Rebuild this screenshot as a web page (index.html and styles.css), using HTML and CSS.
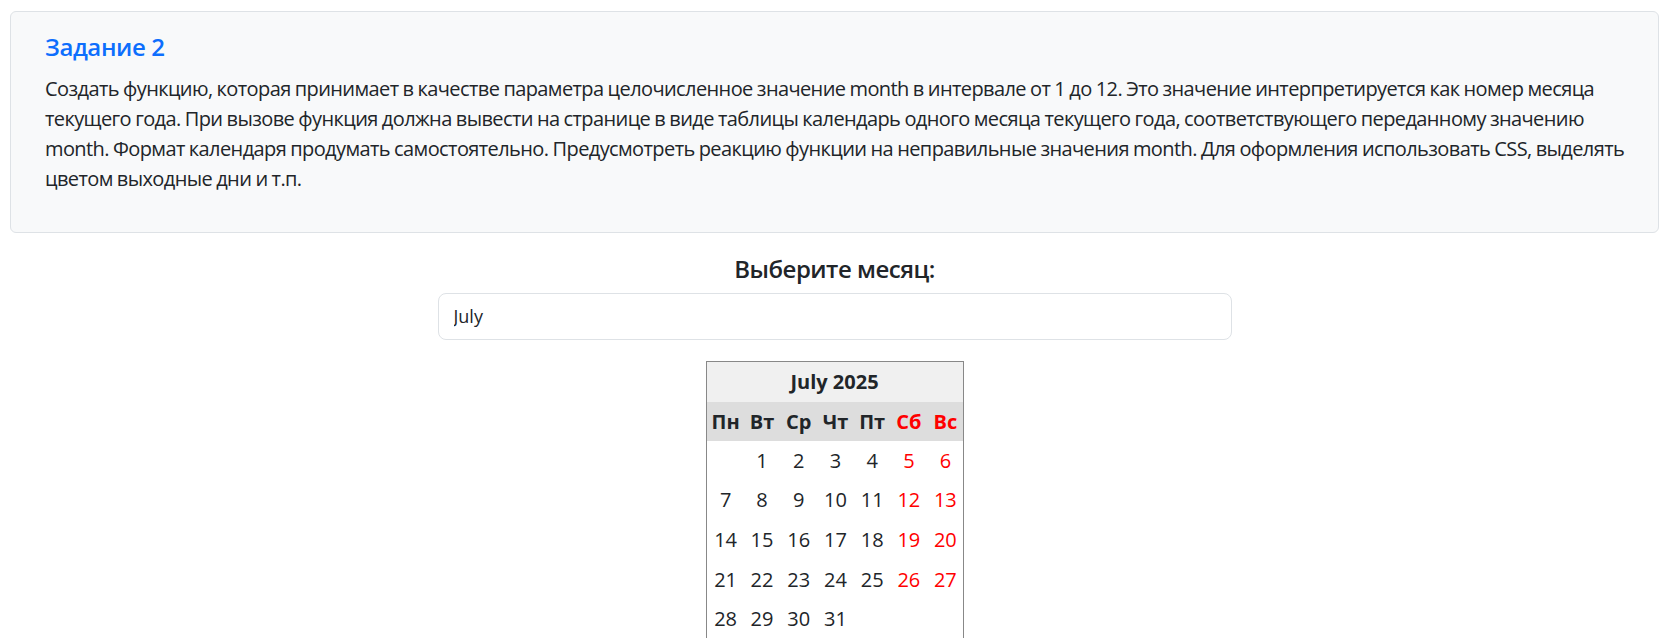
FILE: index.html
```html
<!DOCTYPE html>
<html lang="ru">
<head>
<meta charset="utf-8">
<title>Задание 2</title>
<link rel="stylesheet" href="styles.css">
</head>
<body>
<div class="page">
  <section class="task-card">
    <h2 class="task-title">Задание 2</h2>
    <p class="task-text">Создать функцию, которая принимает в качестве параметра целочисленное значение month в интервале от 1 до 12. Это значение интерпретируется как номер месяца текущего года. При вызове функция должна вывести на странице в виде таблицы календарь одного месяца текущего года, соответствующего переданному значению month. Формат календаря продумать самостоятельно. Предусмотреть реакцию функции на неправильные значения month. Для оформления использовать CSS, выделять цветом выходные дни и т.п.</p>
  </section>

  <div class="picker">
    <h3 class="picker-title">Выберите месяц:</h3>
    <input class="month-input" type="text" value="July" readonly>
  </div>

  <div class="calendar-wrap">
    <table class="calendar">
      <thead>
        <tr><th class="cal-caption" colspan="7">July 2025</th></tr>
        <tr class="cal-days">
          <th>Пн</th><th>Вт</th><th>Ср</th><th>Чт</th><th>Пт</th><th class="weekend">Сб</th><th class="weekend">Вс</th>
        </tr>
      </thead>
      <tbody>
        <tr><td></td><td>1</td><td>2</td><td>3</td><td>4</td><td class="weekend">5</td><td class="weekend">6</td></tr>
        <tr><td>7</td><td>8</td><td>9</td><td>10</td><td>11</td><td class="weekend">12</td><td class="weekend">13</td></tr>
        <tr><td>14</td><td>15</td><td>16</td><td>17</td><td>18</td><td class="weekend">19</td><td class="weekend">20</td></tr>
        <tr><td>21</td><td>22</td><td>23</td><td>24</td><td>25</td><td class="weekend">26</td><td class="weekend">27</td></tr>
        <tr><td>28</td><td>29</td><td>30</td><td>31</td><td></td><td></td><td></td></tr>
      </tbody>
    </table>
  </div>
</div>
</body>
</html>
```

FILE: styles.css
```css
html {
  overflow: hidden;
}

body {
  margin: 0;
  background: #ffffff;
  color: #212529;
  font-family: "Open Sans", "Noto Sans", "Liberation Sans", sans-serif;
}

.page {
  padding: 11px 17px 0 10px;
}

.task-card {
  background: #f8f9fa;
  border: 1px solid #dee2e6;
  border-radius: 6px;
  padding: 21px 18px 38px 34px;
}

.task-title {
  margin: 0 0 12px 0;
  font-size: 24px;
  line-height: 28.8px;
  font-weight: 600;
  letter-spacing: -0.4px;
  color: #0d6efd;
}

.task-text {
  margin: 0;
  font-size: 20px;
  line-height: 30px;
  letter-spacing: -0.6px;
  word-spacing: -0.5px;
}

.picker {
  display: flex;
  flex-direction: column;
  align-items: center;
  margin-top: 22px;
}

.picker-title {
  margin: 0 0 9px 0;
  font-size: 24px;
  line-height: 28.8px;
  font-weight: 600;
  letter-spacing: -0.5px;
}

.month-input {
  box-sizing: border-box;
  width: 794px;
  height: 47px;
  padding: 0 15px;
  border: 1px solid #dee2e6;
  border-radius: 8px;
  background: #ffffff;
  color: #212529;
  font-family: inherit;
  font-size: 18px;
  outline: none;
}

.calendar-wrap {
  display: flex;
  justify-content: center;
  margin-top: 21px;
}

.calendar {
  width: 258px;
  table-layout: fixed;
  border-collapse: collapse;
  border: 1px solid #888888;
  font-size: 20px;
}

.calendar th,
.calendar td {
  padding: 5px 0;
  text-align: center;
  line-height: 29.7px;
}

.calendar td {
  padding-left: 2px;
}

.calendar .cal-caption {
  background: #f0f0f0;
  line-height: 30px;
  font-weight: 700;
}

.cal-days th {
  background: #dddddd;
  line-height: 29px;
  padding-left: 2px;
  font-weight: 700;
}

.calendar .weekend {
  color: #ff0000;
}
```
